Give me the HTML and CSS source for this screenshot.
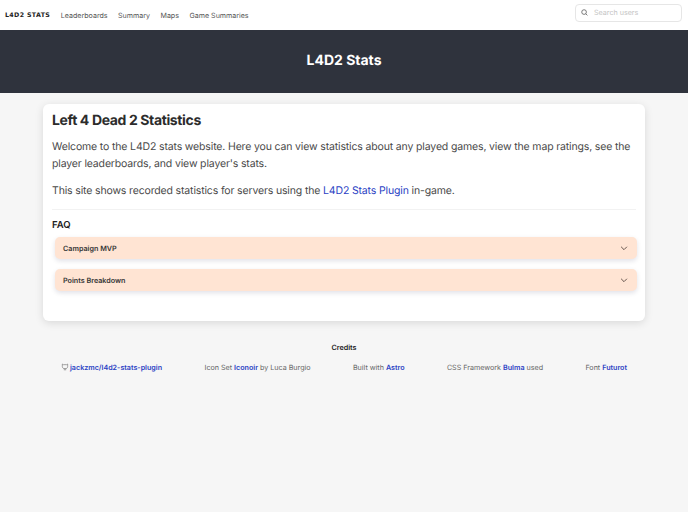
FILE: index.html
```html
<!DOCTYPE html>
<html lang="en">
<head>
<meta charset="utf-8">
<title>L4D2 Stats</title>
<link rel="stylesheet" href="styles.css">
</head>
<body>
<nav class="navbar">
  <div class="nav-left">
    <a class="brand" href="#">L4D2 Stats</a>
    <a class="nav-link" href="#">Leaderboards</a>
    <a class="nav-link" href="#">Summary</a>
    <a class="nav-link" href="#">Maps</a>
    <a class="nav-link" href="#">Game Summaries</a>
  </div>
  <div class="search">
    <svg class="search-icon" viewBox="0 0 24 24" width="7" height="7"><circle cx="10.5" cy="10.5" r="8" fill="none" stroke="#555" stroke-width="2.6"/><path d="M16.5 16.5l5.5 5.5" stroke="#555" stroke-width="2.6"/></svg>
    <span class="search-text">Search users</span>
  </div>
</nav>
<header class="hero"><h1>L4D2 Stats</h1></header>
<main class="container">
  <section class="box">
    <h2>Left 4 Dead 2 Statistics</h2>
    <p>Welcome to the L4D2 stats website. Here you can view statistics about any played games, view the map ratings, see the player leaderboards, and view player's stats.</p>
    <p>This site shows recorded statistics for servers using the <a href="#">L4D2 Stats Plugin</a> in-game.</p>
    <hr>
    <h3>FAQ</h3>
    <div class="faq">
      <div class="faq-item"><span>Campaign MVP</span><svg viewBox="0 0 24 24" width="10" height="10"><path d="M5 9l7 7 7-7" fill="none" stroke="#5a4a44" stroke-width="2.2"/></svg></div>
      <div class="faq-item"><span>Points Breakdown</span><svg viewBox="0 0 24 24" width="10" height="10"><path d="M5 9l7 7 7-7" fill="none" stroke="#5a4a44" stroke-width="2.2"/></svg></div>
    </div>
  </section>
  <footer class="credits">
    <h4>Credits</h4>
    <div class="credit-row">
      <span class="credit"><svg class="gh" viewBox="0 0 24 24" width="8" height="8"><path d="M4 3l3 2h10l3-2v8c0 4-3 6-8 6s-8-2-8-6z M10 17v5 M14 17v5" fill="none" stroke="#777" stroke-width="2"/></svg><a href="#">jackzmc/l4d2-stats-plugin</a></span>
      <span class="credit">Icon Set <a href="#">Iconoir</a> by Luca Burgio</span>
      <span class="credit">Built with <a href="#">Astro</a></span>
      <span class="credit">CSS Framework <a href="#">Bulma</a> used</span>
      <span class="credit">Font <a href="#">Futurot</a></span>
    </div>
  </footer>
</main>
</body>
</html>
```
FILE: styles.css
```css
* { box-sizing: border-box; }
html, body { margin: 0; padding: 0; }
body { background: #f6f6f6; color: #4a4a4a; font-family: Inter, sans-serif; width: 688px; height: 512px; overflow: hidden; text-rendering: geometricPrecision; }
a { color: #2b3fc4; text-decoration: none; }
.navbar { height: 30px; background: #fff; display: flex; align-items: center; justify-content: space-between; padding: 0 5px; }
.nav-left { display: flex; align-items: center; gap: 10.5px; }
.brand { font-family: "DejaVu Sans", sans-serif; font-weight: 700; font-size: 6.3px; letter-spacing: .35px; color: #222; text-transform: uppercase; }
.nav-link { font-size: 7.1px; color: #555; }
.search { width: 107px; height: 18px; margin-top: -5px; margin-right: 1px; border: 1px solid #e6e6e6; border-radius: 4px; background: #fff; display: flex; align-items: center; padding-left: 5px; gap: 6px; }
.search-text { font-size: 7.15px; color: #c4c4c4; }
.hero { height: 63px; background: #2f333d; display: flex; align-items: center; justify-content: center; }
.hero h1 { margin: 0 0 3px; color: #fff; font-size: 14px; font-weight: 700; }
.container { width: 602px; margin: 11px auto 0; }
.box { background: #fff; border-radius: 6px; box-shadow: 0 2px 8px rgba(10,10,10,.12); padding: 10px 9px 30px; height: 217px; }
.box h2 { margin: 0 0 10px; font-size: 14px; font-weight: 700; letter-spacing: -.37px; color: #2c2c2c; line-height: 14px; }
.box p { margin: 0 0 10px; font-size: 10.5px; letter-spacing: -.15px; line-height: 17px; color: #4a4a4a; }
.box hr { border: 0; border-top: 1px solid #f2f2f2; margin: 9px 0 10px; }
.box h3 { margin: 0 0 6px; font-size: 9.5px; font-weight: 600; color: #222; }
.faq { margin: 0 -1px 0 3px; display: flex; flex-direction: column; gap: 10px; }
.faq-item { height: 22px; background: #ffe4d3; border-radius: 5px; box-shadow: 0 2px 5px rgba(10,10,60,.12); display: flex; align-items: center; justify-content: space-between; padding: 0 8px; font-size: 7.2px; font-weight: 600; color: #363636; }
.credits { text-align: center; margin-top: 22px; }
.credits h4 { margin: 0 0 11px; font-size: 7.2px; font-weight: 600; color: #222; }
.credit-row { display: flex; justify-content: space-between; padding: 0 18px; font-size: 7.15px; color: #666; }
.credit-row a { font-weight: 600; }
.gh { vertical-align: -1px; margin-right: 1px; }
```
